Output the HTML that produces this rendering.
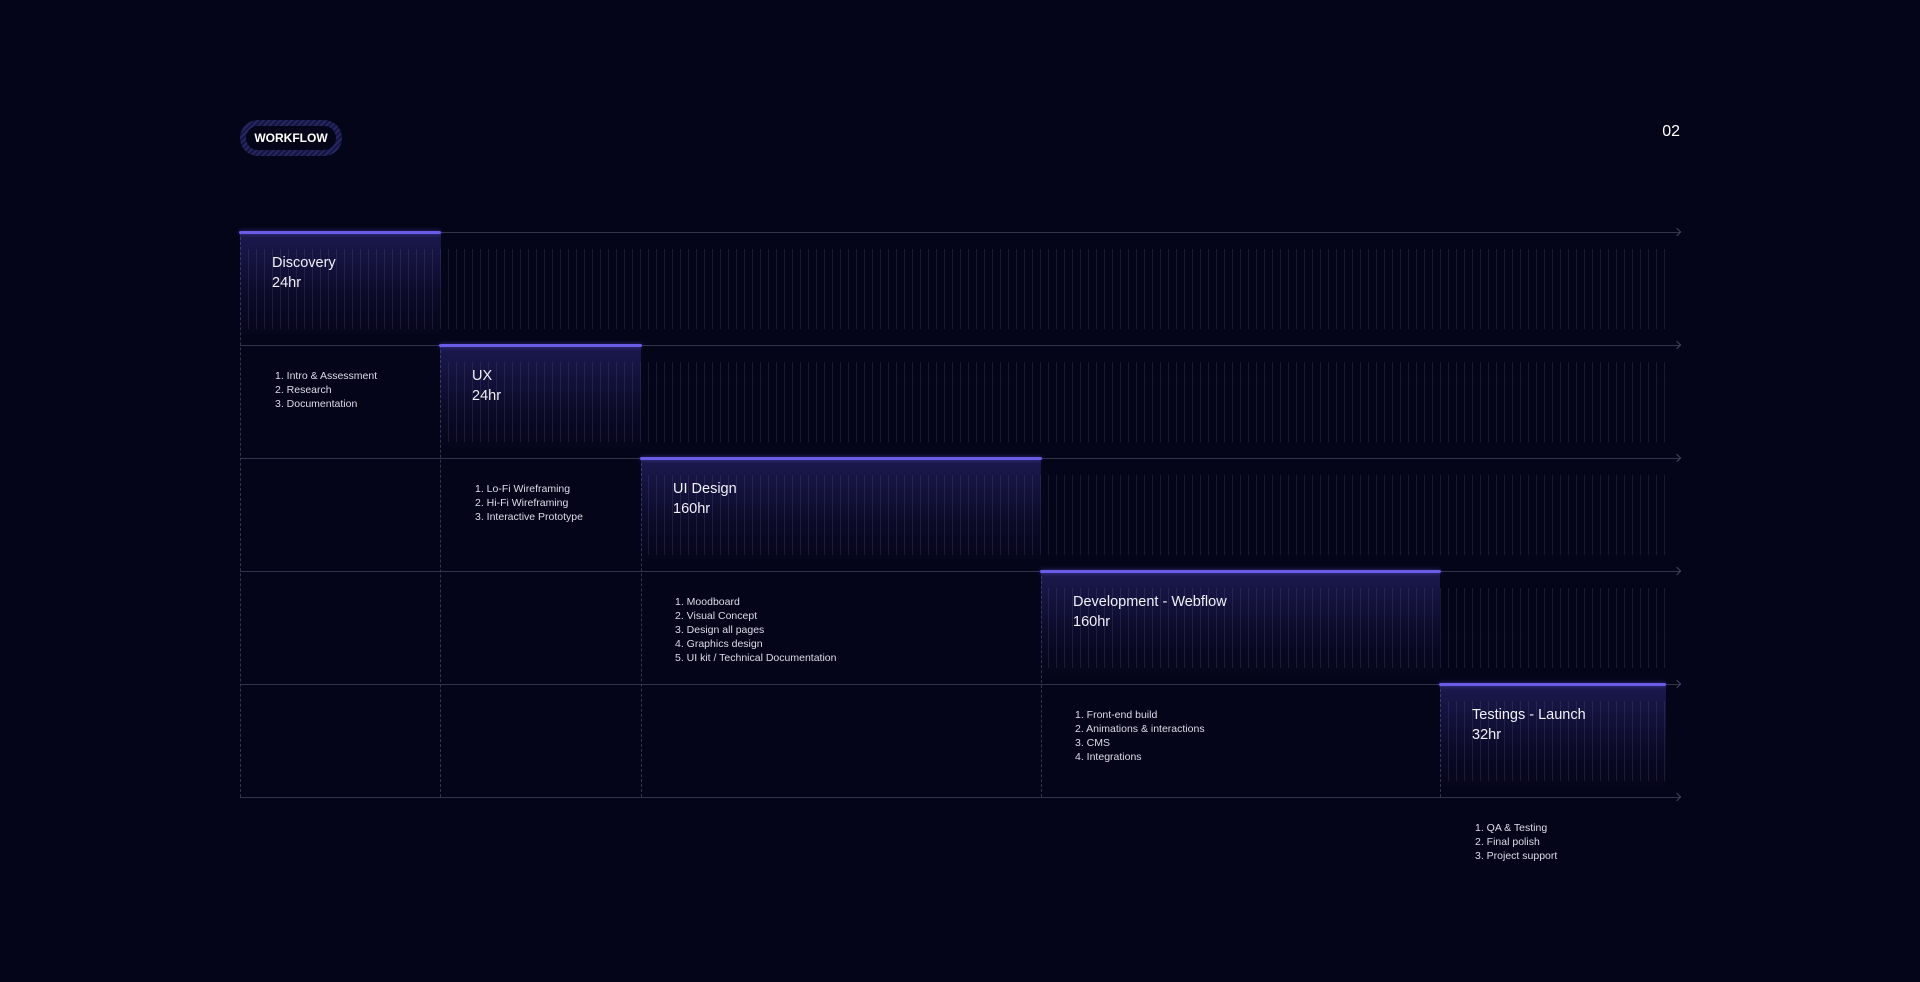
<!DOCTYPE html>
<html><head><style>
*{margin:0;padding:0;box-sizing:border-box}
body{width:1920px;height:982px;background:#05051a;position:relative;overflow:hidden;font-family:"Liberation Sans",sans-serif;color:#e8e8f0}
.pill{position:absolute;left:240px;top:120px;width:102px;height:36px;border-radius:18px;background:repeating-linear-gradient(135deg,#262660 0 2px,#15153f 2px 4px)}
.pill span{position:absolute;left:6px;top:6px;right:6px;bottom:6px;border-radius:13px;background:#05051a;font-size:12px;font-weight:bold;color:#fff;display:flex;align-items:center;justify-content:center}
.num{position:absolute;right:240px;top:123px;font-size:16px;color:#fff}
.hl{position:absolute;left:240px;width:1440px;height:1px;background:#33334a}
.arr{position:absolute;left:1674px;width:6px;height:6px;border-top:1px solid #45455d;border-right:1px solid #45455d;transform:rotate(45deg)}
.stripes{position:absolute;height:80px;background:repeating-linear-gradient(90deg,rgba(255,255,255,0.085) 0 1px,transparent 1px 8px)}
.box{position:absolute;height:105px;background:linear-gradient(180deg,rgba(75,68,190,0.32),rgba(55,48,150,0.12) 60%,rgba(5,5,26,0))}
.bar{position:absolute;height:4px;border-radius:2px;background:#6b5ce7;box-shadow:0 0 4px rgba(107,92,231,.5)}
.dash{position:absolute;width:0;border-left:1px dashed #34344f}
.t{position:absolute;font-size:14.5px;line-height:20px;color:#f0f0f8}
.l{position:absolute;font-size:10.5px;line-height:14px;color:#dcdce8}
</style></head><body>
<div class="pill"><span>WORKFLOW</span></div>
<div class="num">02</div>

<div class="hl" style="top:232px"></div><div class="arr" style="top:229px"></div>
<div class="hl" style="top:345px"></div><div class="arr" style="top:342px"></div>
<div class="hl" style="top:458px"></div><div class="arr" style="top:455px"></div>
<div class="hl" style="top:571px"></div><div class="arr" style="top:568px"></div>
<div class="hl" style="top:684px"></div><div class="arr" style="top:681px"></div>
<div class="hl" style="top:797px"></div><div class="arr" style="top:794px"></div>

<div class="dash" style="left:240px;top:232px;height:565px"></div>
<div class="dash" style="left:440px;top:345px;height:452px"></div>
<div class="dash" style="left:641px;top:458px;height:339px"></div>
<div class="dash" style="left:1041px;top:571px;height:226px"></div>
<div class="dash" style="left:1440px;top:684px;height:113px"></div>

<div class="stripes" style="left:248px;width:1418px;top:249px"></div>
<div class="stripes" style="left:448px;width:1218px;top:362px"></div>
<div class="stripes" style="left:648px;width:1018px;top:475px"></div>
<div class="stripes" style="left:1048px;width:618px;top:588px"></div>
<div class="stripes" style="left:1448px;width:218px;top:701px"></div>

<div class="box" style="left:240px;width:201px;top:232px"></div>
<div class="box" style="left:440px;width:201px;top:345px"></div>
<div class="box" style="left:641px;width:400px;top:458px"></div>
<div class="box" style="left:1041px;width:399px;top:571px"></div>
<div class="box" style="left:1440px;width:226px;top:684px"></div>

<div class="bar" style="left:239px;width:202px;top:231px;height:3px"></div>
<div class="bar" style="left:439px;width:203px;top:344px;height:3px"></div>
<div class="bar" style="left:640px;width:402px;top:457px;height:3px"></div>
<div class="bar" style="left:1040px;width:401px;top:570px;height:3px"></div>
<div class="bar" style="left:1439px;width:227px;top:683px;height:3px"></div>

<div class="t" style="left:272px;top:253px">Discovery<br>24hr</div>
<div class="t" style="left:472px;top:366px">UX<br>24hr</div>
<div class="t" style="left:673px;top:479px">UI Design<br>160hr</div>
<div class="t" style="left:1073px;top:592px">Development - Webflow<br>160hr</div>
<div class="t" style="left:1472px;top:705px">Testings - Launch<br>32hr</div>

<div class="l" style="left:275px;top:369px">1. Intro &amp; Assessment<br>2. Research<br>3. Documentation</div>
<div class="l" style="left:475px;top:482px">1. Lo-Fi Wireframing<br>2. Hi-Fi Wireframing<br>3. Interactive Prototype</div>
<div class="l" style="left:675px;top:595px">1. Moodboard<br>2. Visual Concept<br>3. Design all pages<br>4. Graphics design<br>5. UI kit / Technical Documentation</div>
<div class="l" style="left:1075px;top:708px">1. Front-end build<br>2. Animations &amp; interactions<br>3. CMS<br>4. Integrations</div>
<div class="l" style="left:1475px;top:821px">1. QA &amp; Testing<br>2. Final polish<br>3. Project support</div>
</body></html>
